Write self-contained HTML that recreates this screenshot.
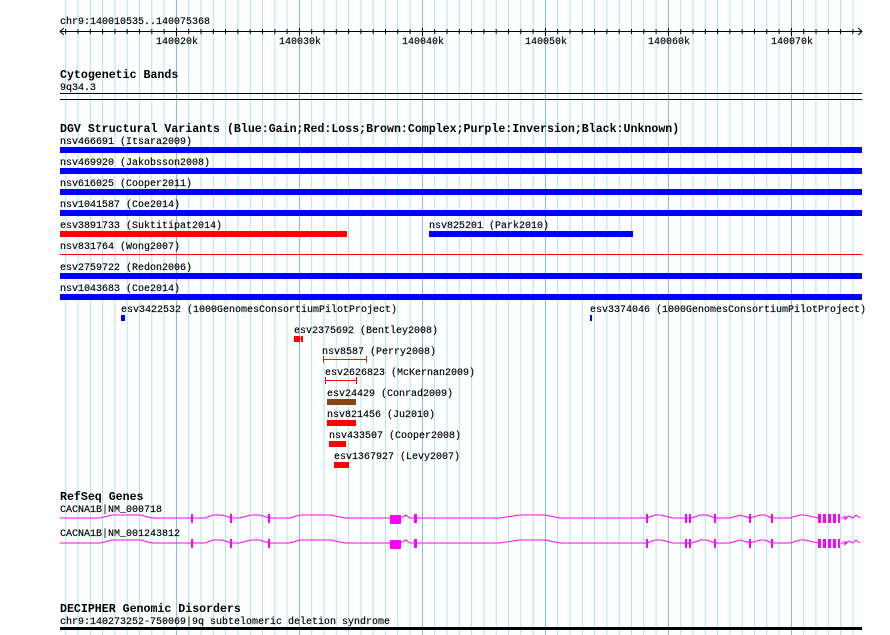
<!DOCTYPE html>
<html><head><meta charset="utf-8"><style>
html,body{margin:0;padding:0;background:#fff;width:890px;height:635px;overflow:hidden}
svg{display:block}
text{font-family:"Liberation Mono","DejaVu Sans Mono",monospace;font-size:10px;fill:#000;stroke:#000;stroke-width:0.15px}
.b{font-weight:bold;font-size:11.6px;stroke:none}
</style></head><body>
<svg width="890" height="635" viewBox="0 0 890 635" xmlns="http://www.w3.org/2000/svg">
<defs>
<pattern id="g" x="65.2" y="0" width="12.3" height="635" patternUnits="userSpaceOnUse">
<rect x="0" y="0" width="1" height="635" fill="#a8e6ee"/>
</pattern>
<pattern id="t" x="65.2" y="0" width="12.3" height="10" patternUnits="userSpaceOnUse">
<rect x="0" y="0" width="1" height="10" fill="#000"/>
</pattern>
</defs>
<rect x="60" y="0" width="802" height="635" fill="url(#g)"/>
<g fill="#7fbfe6">
<rect x="176" y="0" width="1" height="635"/><rect x="299" y="0" width="1" height="635"/>
<rect x="422" y="0" width="1" height="635"/><rect x="545" y="0" width="1" height="635"/>
<rect x="668" y="0" width="1" height="635"/><rect x="791" y="0" width="1" height="635"/>
</g>
<text x="60" y="24">chr9:140010535..140075368</text>
<rect x="60" y="31" width="802" height="1" fill="#000"/>
<rect x="60" y="29" width="802" height="5" fill="url(#t)"/>
<g fill="#000"><rect x="176" y="28" width="1" height="8"/><rect x="299" y="28" width="1" height="8"/><rect x="422" y="28" width="1" height="8"/><rect x="545" y="28" width="1" height="8"/><rect x="668" y="28" width="1" height="8"/><rect x="791" y="28" width="1" height="8"/></g>
<path d="M64 28 L60 31.5 L64 35 M858 28 L862 31.5 L858 35" stroke="#000" fill="none"/>
<g text-anchor="middle"><text x="177" y="44">140020k</text><text x="300" y="44">140030k</text><text x="423" y="44">140040k</text><text x="546" y="44">140050k</text><text x="669" y="44">140060k</text><text x="792" y="44">140070k</text></g>
<text class="b" x="60" y="78">Cytogenetic Bands</text>
<text x="60" y="90">9q34.3</text>
<rect x="60" y="93" width="802" height="1" fill="#000"/>
<rect x="60" y="99" width="802" height="1" fill="#000"/>
<text class="b" x="60" y="132">DGV Structural Variants (Blue:Gain;Red:Loss;Brown:Complex;Purple:Inversion;Black:Unknown)</text>
<text x="60" y="144">nsv466691 (Itsara2009)</text>
<rect x="60" y="147" width="802" height="6" fill="#0000ff"/>
<text x="60" y="165">nsv469920 (Jakobsson2008)</text>
<rect x="60" y="168" width="802" height="6" fill="#0000ff"/>
<text x="60" y="186">nsv616025 (Cooper2011)</text>
<rect x="60" y="189" width="802" height="6" fill="#0000ff"/>
<text x="60" y="207">nsv1041587 (Coe2014)</text>
<rect x="60" y="210" width="802" height="6" fill="#0000ff"/>
<text x="60" y="228">esv3891733 (Suktitipat2014)</text>
<rect x="60" y="231" width="287" height="6" fill="#ff0000"/>
<text x="429" y="228">nsv825201 (Park2010)</text>
<rect x="429" y="231" width="204" height="6" fill="#0000ff"/>
<text x="60" y="249">nsv831764 (Wong2007)</text>
<rect x="60" y="254" width="802" height="1" fill="#ff0000"/>
<text x="60" y="270">esv2759722 (Redon2006)</text>
<rect x="60" y="273" width="802" height="6" fill="#0000ff"/>
<text x="60" y="291">nsv1043683 (Coe2014)</text>
<rect x="60" y="294" width="802" height="6" fill="#0000ff"/>
<text x="121" y="312">esv3422532 (1000GenomesConsortiumPilotProject)</text>
<rect x="121" y="315" width="4" height="6" fill="#0000ff"/>
<text x="590" y="312">esv3374046 (1000GenomesConsortiumPilotProject)</text>
<rect x="590" y="315" width="2" height="6" fill="#0000ff"/>
<text x="294" y="333">esv2375692 (Bentley2008)</text>
<rect x="294" y="336" width="6" height="6" fill="#ff0000"/><rect x="301" y="336" width="2" height="6" fill="#ff0000"/><rect x="300" y="338" width="1" height="1" fill="#ff0000"/>
<text x="322" y="354">nsv8587 (Perry2008)</text>
<path d="M323 359.5H366M323.5 356v7M366.5 356v7" stroke="#8b4513" fill="none"/>
<text x="325" y="375">esv2626823 (McKernan2009)</text>
<path d="M325 380.5H356M325.5 377v7M356.5 377v7" stroke="#ff0000" fill="none"/>
<text x="327" y="396">esv24429 (Conrad2009)</text>
<rect x="327" y="399" width="29" height="6" fill="#8b4513"/>
<text x="327" y="417">nsv821456 (Ju2010)</text>
<rect x="327" y="420" width="29" height="6" fill="#ff0000"/>
<text x="329" y="438">nsv433507 (Cooper2008)</text>
<rect x="329" y="441" width="17" height="6" fill="#ff0000"/>
<text x="334" y="459">esv1367927 (Levy2007)</text>
<rect x="334" y="462" width="15" height="6" fill="#ff0000"/>
<text class="b" x="60" y="500">RefSeq Genes</text>
<text x="60" y="512">CACNA1B|NM_000718</text>
<text x="60" y="536">CACNA1B|NM_001243812</text>
<g id="gene" fill="none" stroke="#ff00ff">
<polyline points="60,518 100,518 112,515 140,515 152,518 175,518 192,518 205,518 213,515 222,515 231,518 240,518 250,515 260,515 269,518 290,518 300,515 330,515 345,518 390,518"/>
<polyline points="401,518 406,515 410,518 415,518 430,518 460,518 500,518 520,515 545,515 560,518 632,518 647,518 655,515 662,515 672,518 685,518 692,518 700,515 707,515 715,518 730,518 740,515 750,518 760,515 765,515 772,518 790,518 800,515 805,515 818,518"/>
<polyline points="845,518 849,516 853,518 856,515 860,518"/>
</g>
<g id="ex" fill="#ff00ff">
<rect x="191" y="514" width="2" height="9"/><rect x="230" y="514" width="2" height="9"/><rect x="268" y="514" width="2" height="9"/>
<rect x="390" y="515" width="11" height="9"/><rect x="414" y="514" width="3" height="9"/>
<rect x="646" y="514" width="2" height="9"/><rect x="685" y="514" width="2" height="9"/><rect x="689" y="514" width="2" height="9"/>
<rect x="714" y="514" width="2" height="9"/><rect x="749" y="514" width="2" height="9"/><rect x="771" y="514" width="2" height="9"/>
<rect x="818" y="514" width="3" height="9"/><rect x="823" y="514" width="3" height="9"/><rect x="828" y="514" width="3" height="9"/><rect x="833" y="514" width="3" height="9"/><rect x="838" y="514" width="2" height="9"/>
</g>
<path d="M841 518h6M844 516l3 2-3 2" stroke="#ff00ff" fill="none"/>
<use href="#gene" y="25"/>
<use href="#ex" y="25"/>
<path d="M841 543h6M844 541l3 2-3 2" stroke="#ff00ff" fill="none"/>
<text class="b" x="60" y="612">DECIPHER Genomic Disorders</text>
<text x="60" y="624">chr9:140273252-750069|9q subtelomeric deletion syndrome</text>
<rect x="60" y="627" width="802" height="3" fill="#000"/>
</svg>
</body></html>
